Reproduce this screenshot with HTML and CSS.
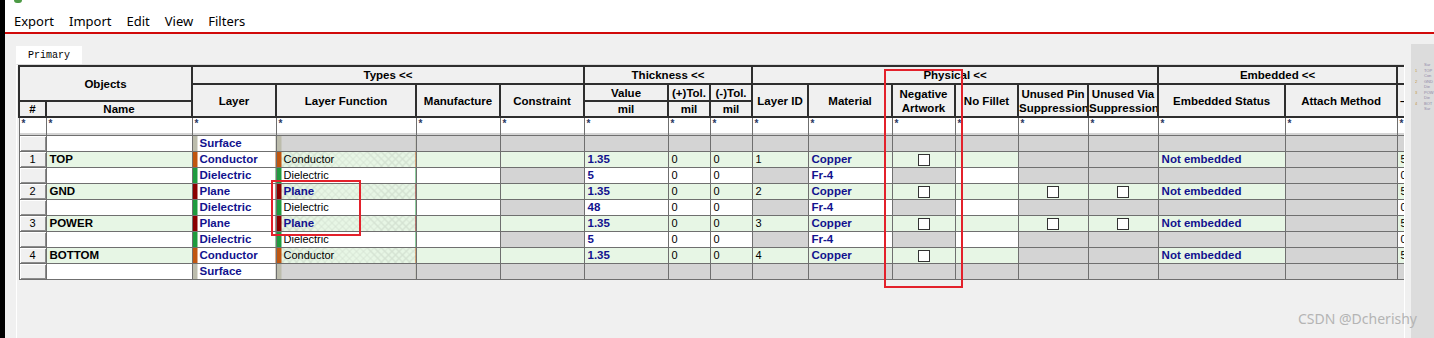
FILE: index.html
```html
<!DOCTYPE html>
<html lang="en">
<head>
    <meta charset="UTF-8">
    <title>Cross Section Editor</title>
    <link rel="stylesheet" href="styles.css">
</head>
<body>
<div class="app">
    <header class="topbar">
        <span class="app-icon"></span>
        <nav class="menu">
            <span>Export</span>
            <span>Import</span>
            <span>Edit</span>
            <span>View</span>
            <span>Filters</span>
        </nav>
    </header>

    <div class="workspace">
        <div class="main">
            <div class="tabs"><span class="tab">Primary</span></div>
            <div class="panel">
                <div class="grid-clip">
                    <table class="grid">
                        <colgroup>
                            <col style="width:27px"><col style="width:146px">
                            <col style="width:84px"><col style="width:140px"><col style="width:84px"><col style="width:84px">
                            <col style="width:84px"><col style="width:42px"><col style="width:42px">
                            <col style="width:56px"><col style="width:84px"><col style="width:63px"><col style="width:63px"><col style="width:70px"><col style="width:70px">
                            <col style="width:127px"><col style="width:112px">
                            <col style="width:60px">
                        </colgroup>
                        <thead>
                            <tr class="h1">
                                <th colspan="2" rowspan="2" class="objects">Objects</th>
                                <th colspan="4">Types &lt;&lt;</th>
                                <th colspan="3">Thickness &lt;&lt;</th>
                                <th colspan="6">Physical &lt;&lt;</th>
                                <th colspan="2">Embedded &lt;&lt;</th>
                                <th></th>
                            </tr>
                            <tr class="h2">
                                <th rowspan="2">Layer</th>
                                <th rowspan="2">Layer Function</th>
                                <th rowspan="2">Manufacture</th>
                                <th rowspan="2">Constraint</th>
                                <th>Value</th>
                                <th>(+)Tol.</th>
                                <th>(-)Tol.</th>
                                <th rowspan="2">Layer ID</th>
                                <th rowspan="2">Material</th>
                                <th rowspan="2">Negative<br>Artwork</th>
                                <th rowspan="2">No Fillet</th>
                                <th rowspan="2"><div class="clip">Unused Pin Suppression</div></th>
                                <th rowspan="2"><div class="clip">Unused Via Suppression</div></th>
                                <th rowspan="2">Embedded Status</th>
                                <th rowspan="2">Attach Method</th>
                                <th rowspan="2" class="cut">–</th>
                            </tr>
                            <tr class="h3">
                                <th>#</th>
                                <th>Name</th>
                                <th>mil</th>
                                <th>mil</th>
                                <th>mil</th>
                            </tr>
                        </thead>
                        <tbody>
                            <tr class="flt">
                                <td>*</td><td>*</td><td>*</td><td>*</td><td>*</td><td>*</td><td>*</td><td>*</td><td>*</td>
                                <td>*</td><td>*</td><td>*</td><td>*</td><td>*</td><td>*</td><td>*</td><td>*</td><td>*</td>
                            </tr>
                            <tr class="sep">
                                <td></td><td></td><td></td><td></td><td></td><td></td><td></td><td></td><td></td>
                                <td></td><td></td><td></td><td></td><td></td><td></td><td></td><td></td><td></td>
                            </tr>

                            <!-- Surface -->
                            <tr class="r">
                                <td class="num"></td>
                                <td class="w"></td>
                                <td class="w bar surf b">Surface</td>
                                <td class="x bar surf"></td>
                                <td class="x"></td><td class="x"></td>
                                <td class="x"></td><td class="x"></td><td class="x"></td>
                                <td class="x"></td><td class="x"></td><td class="x"></td><td class="x"></td><td class="x"></td><td class="x"></td>
                                <td class="x"></td><td class="x"></td><td class="x"></td>
                            </tr>
                            <!-- TOP -->
                            <tr class="r">
                                <td class="num">1</td>
                                <td class="g nm">TOP</td>
                                <td class="w bar cond b">Conductor</td>
                                <td class="h bar cond">Conductor</td>
                                <td class="g"></td><td class="g"></td>
                                <td class="g b">1.35</td><td class="g">0</td><td class="g">0</td>
                                <td class="g">1</td><td class="g b">Copper</td>
                                <td class="g c"><span class="cb"></span></td>
                                <td class="g"></td><td class="x"></td><td class="x"></td>
                                <td class="g b">Not embedded</td><td class="x"></td><td class="g">5</td>
                            </tr>
                            <tr class="r">
                                <td class="num"></td>
                                <td class="w"></td>
                                <td class="w bar diel b">Dielectric</td>
                                <td class="w bar diel">Dielectric</td>
                                <td class="w"></td><td class="x"></td>
                                <td class="w b">5</td><td class="w">0</td><td class="w">0</td>
                                <td class="x"></td><td class="w b">Fr-4</td>
                                <td class="x"></td><td class="w"></td><td class="x"></td><td class="x"></td>
                                <td class="x"></td><td class="x"></td><td class="w">0</td>
                            </tr>
                            <!-- GND -->
                            <tr class="r">
                                <td class="num">2</td>
                                <td class="g nm">GND</td>
                                <td class="w bar plane b">Plane</td>
                                <td class="h bar plane b">Plane</td>
                                <td class="g"></td><td class="g"></td>
                                <td class="g b">1.35</td><td class="g">0</td><td class="g">0</td>
                                <td class="g">2</td><td class="g b">Copper</td>
                                <td class="g c"><span class="cb"></span></td>
                                <td class="g"></td>
                                <td class="g c"><span class="cb"></span></td>
                                <td class="g c"><span class="cb"></span></td>
                                <td class="g b">Not embedded</td><td class="x"></td><td class="g">5</td>
                            </tr>
                            <tr class="r">
                                <td class="num"></td>
                                <td class="w"></td>
                                <td class="w bar diel b">Dielectric</td>
                                <td class="w bar diel">Dielectric</td>
                                <td class="w"></td><td class="x"></td>
                                <td class="w b">48</td><td class="w">0</td><td class="w">0</td>
                                <td class="x"></td><td class="w b">Fr-4</td>
                                <td class="x"></td><td class="w"></td><td class="x"></td><td class="x"></td>
                                <td class="x"></td><td class="x"></td><td class="w">0</td>
                            </tr>
                            <!-- POWER -->
                            <tr class="r">
                                <td class="num">3</td>
                                <td class="g nm">POWER</td>
                                <td class="w bar plane b">Plane</td>
                                <td class="h bar plane b">Plane</td>
                                <td class="g"></td><td class="g"></td>
                                <td class="g b">1.35</td><td class="g">0</td><td class="g">0</td>
                                <td class="g">3</td><td class="g b">Copper</td>
                                <td class="g c"><span class="cb"></span></td>
                                <td class="g"></td>
                                <td class="g c"><span class="cb"></span></td>
                                <td class="g c"><span class="cb"></span></td>
                                <td class="g b">Not embedded</td><td class="x"></td><td class="g">5</td>
                            </tr>
                            <tr class="r">
                                <td class="num"></td>
                                <td class="w"></td>
                                <td class="w bar diel b">Dielectric</td>
                                <td class="w bar diel">Dielectric</td>
                                <td class="w"></td><td class="x"></td>
                                <td class="w b">5</td><td class="w">0</td><td class="w">0</td>
                                <td class="x"></td><td class="w b">Fr-4</td>
                                <td class="x"></td><td class="w"></td><td class="x"></td><td class="x"></td>
                                <td class="x"></td><td class="x"></td><td class="w">0</td>
                            </tr>
                            <!-- BOTTOM -->
                            <tr class="r">
                                <td class="num">4</td>
                                <td class="g nm">BOTTOM</td>
                                <td class="w bar cond b">Conductor</td>
                                <td class="h bar cond">Conductor</td>
                                <td class="g"></td><td class="g"></td>
                                <td class="g b">1.35</td><td class="g">0</td><td class="g">0</td>
                                <td class="g">4</td><td class="g b">Copper</td>
                                <td class="g c"><span class="cb"></span></td>
                                <td class="g"></td><td class="x"></td><td class="x"></td>
                                <td class="g b">Not embedded</td><td class="x"></td><td class="g">5</td>
                            </tr>
                            <!-- Surface -->
                            <tr class="r">
                                <td class="num"></td>
                                <td class="w"></td>
                                <td class="w bar surf b">Surface</td>
                                <td class="x bar surf"></td>
                                <td class="x"></td><td class="x"></td>
                                <td class="x"></td><td class="x"></td><td class="x"></td>
                                <td class="x"></td><td class="x"></td><td class="x"></td><td class="x"></td><td class="x"></td><td class="x"></td>
                                <td class="x"></td><td class="x"></td><td class="x"></td>
                            </tr>
                        </tbody>
                    </table>
                </div>
            </div>
        </div>

        <aside class="minimap">
            <p class="mm-t">Sur</p>
            <p><i>1</i>TOP</p>
            <p class="mm-t">Con</p>
            <p><i>2</i>GND</p>
            <p class="mm-t">Die</p>
            <p><i>3</i>POW</p>
            <p class="mm-t">Die</p>
            <p><i>4</i>BOT</p>
            <p class="mm-t">Sur</p>
        </aside>
    </div>
</div>

<span class="note note-fn"></span>
<span class="note note-neg"></span>
<div class="watermark">CSDN @Dcherishy</div>
</body>
</html>
```

FILE: styles.css
```css
* {
    margin: 0;
    padding: 0;
    box-sizing: border-box;
}

body {
    position: relative;
    width: 1434px;
    height: 338px;
    overflow: hidden;
    background: #f0f0f0;
    font-family: "Liberation Sans", Arial, sans-serif;
    color: #000;
}

.app {
    height: 338px;
    border-left: 5px solid #000;
    display: flex;
    flex-direction: column;
}

/* top menu */
.topbar {
    height: 34px;
    background: #fff;
    border-bottom: 2px solid #d10a0a;
}

.app-icon {
    display: block;
    width: 8px;
    height: 3px;
    margin-left: 9px;
    background: #4c9a45;
    border-radius: 0 0 4px 4px;
}

.menu {
    display: flex;
    gap: 15px;
    padding: 8px 0 0 9px;
    font-family: "Noto Sans", sans-serif;
    font-size: 13px;
    line-height: 20px;
}

/* work area */
.workspace {
    flex: 1;
    display: flex;
    gap: 6px;
    padding: 10px 0 0 11px;
}

.main {
    width: 1389px;
    display: flex;
    flex-direction: column;
}

.tabs {
    height: 20px;
}

.tab {
    display: inline-block;
    width: 66px;
    height: 20px;
    padding-left: 12px;
    background: #fff;
    font-family: "Liberation Mono", monospace;
    font-size: 10px;
    line-height: 20px;
}

.panel {
    flex: 1;
    border-top: 1px solid #dadada;
    border-left: 1px solid #fff;
    border-right: 1px solid #fff;
    padding-left: 1px;
}

.grid-clip {
    width: 1386px;
    overflow: hidden;
}

/* grid */
.grid {
    width: 1438px;
    table-layout: fixed;
    border-collapse: collapse;
    font-size: 11px;
}

.grid th {
    background: #f0f0f0;
    border: 2px solid #2e2e2e;
    font-size: 11.5px;
    line-height: 14px;
    font-weight: bold;
    text-align: center;
    padding: 0;
    overflow: hidden;
}

.h1 { height: 18px; }
.h2 { height: 17px; }
.h3 { height: 16px; }

.grid th.cut {
    text-align: left;
    padding-left: 2px;
}

.clip {
    overflow: hidden;
}

.grid td {
    border: 1px solid #6f6f6f;
    padding: 0 0 0 3px;
    line-height: 14px;
    white-space: nowrap;
    overflow: hidden;
}

.flt td {
    background: #fff;
    height: 16px;
    border-bottom: none;
    vertical-align: top;
    font-weight: bold;
    font-size: 10px;
    line-height: 10px;
    padding: 1px 0 0 2px;
    color: #2a3560;
}

.sep td {
    height: 2px;
    background: #d4d4d4;
    border-top: none;
    padding: 0;
    font-size: 0;
    line-height: 0;
}

.r { height: 16px; }

.g { background: #e7f6e5; }
.w { background: #fff; }
.x { background: #d4d4d4; }

.grid td.b {
    color: #12128e;
    font-weight: bold;
    font-size: 11.5px;
}

.grid td.nm {
    font-weight: bold;
    font-size: 11.5px;
}

.grid td.num {
    background: #f0f0f0;
    text-align: center;
    padding: 0;
    box-shadow: inset 1px 1px 0 #fff, inset -1px -1px 0 #8c8c8c;
}

.cond { --bar: #c0560f; }
.diel { --bar: #1f9b3e; }
.plane { --bar: #8a0000; }
.surf { --bar: #bcbcac; }

.grid td.bar {
    padding-left: 7px;
    background-image: linear-gradient(90deg, var(--bar) 5px, transparent 5px);
}

.grid td.h {
    background-color: #e7f6e5;
    background-image:
        linear-gradient(90deg, var(--bar) 5px, transparent 5px),
        repeating-linear-gradient(45deg, transparent 0 4px, #d4e2d2 4px 5px),
        repeating-linear-gradient(-45deg, transparent 0 4px, #d4e2d2 4px 5px);
}

.grid td.c {
    text-align: center;
    padding: 0;
}

.cb {
    display: inline-block;
    width: 12px;
    height: 12px;
    border: 1px solid #333;
    background: #fff;
    vertical-align: middle;
}

/* right strip */
.minimap {
    width: 23px;
    background: #dcdcdc;
    padding: 18px 0 0 4px;
    font-size: 4px;
    line-height: 5.5px;
    color: #8f88a6;
}

.minimap p {
    white-space: nowrap;
    overflow: hidden;
}

.minimap .mm-t {
    padding-left: 9px;
}

.minimap i {
    font-style: normal;
    color: #c49a3c;
    display: inline-block;
    width: 9px;
}

/* annotations */
.note {
    position: absolute;
    border: 2px solid #e3212b;
}

.note-fn {
    left: 271px;
    top: 180px;
    width: 90px;
    height: 56px;
}

.note-neg {
    left: 884px;
    top: 69px;
    width: 79px;
    height: 219px;
}

.watermark {
    position: absolute;
    left: 1298px;
    top: 310px;
    font-family: "Noto Sans", sans-serif;
    font-size: 14px;
    line-height: 18px;
    color: #b4b4b4;
}
```
